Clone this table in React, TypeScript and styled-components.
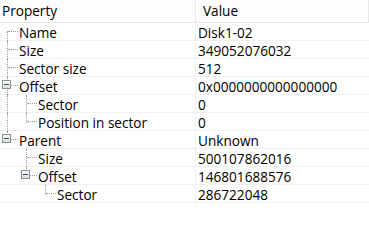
import React from "react";
import styled, { createGlobalStyle } from "styled-components";

const GlobalStyle = createGlobalStyle`
  html, body {
    margin: 0;
    padding: 0;
    background: #ffffff;
  }
  body {
    font-family: "Open Sans", "Noto Sans", sans-serif;
    font-size: 13.6px;
    color: #000000;
  }
`;

const INDENT = 19;

const Grid = styled.div`
  width: 369px;
  height: 245px;
  overflow: hidden;
  background: #ffffff;
`;

const Header = styled.div`
  display: grid;
  grid-template-columns: 196px 1fr;
  height: 22px;
  background: #fdfdfd;
  border-bottom: 1px solid #dfe9f5;
`;

const HeaderCell = styled.div<{ $pad: number }>`
  display: flex;
  align-items: center;
  padding-left: ${(p) => p.$pad}px;
  border-right: 1px solid #e8e8e8;
  line-height: 1;
`;

const Row = styled.div`
  display: grid;
  grid-template-columns: 196px 1fr;
  height: 17px;
  border-bottom: 1px solid #f0f0f0;
`;

const NameCell = styled.div`
  display: flex;
  align-items: stretch;
  border-right: 1px solid #f0f0f0;
  white-space: nowrap;
`;

const ValueCell = styled.div`
  display: flex;
  align-items: center;
  padding-left: 2px;
  white-space: nowrap;
`;

const Guide = styled.div`
  position: relative;
  flex: 0 0 ${INDENT}px;
  height: 100%;
`;

const VLine = styled.div<{ $from: "top" | "mid"; $to: "mid" | "bottom" }>`
  position: absolute;
  left: 7px;
  top: ${(p) => (p.$from === "top" ? "0" : "8px")};
  bottom: ${(p) => (p.$to === "bottom" ? "-1px" : "9px")};
  border-left: 1px dotted #a0a0a0;
`;

const HLine = styled.div`
  position: absolute;
  left: 8px;
  width: 10px;
  top: 8px;
  border-top: 1px dotted #a0a0a0;
`;

const ExpandBox = styled.div`
  position: absolute;
  left: 2px;
  top: 3px;
  width: 9px;
  height: 9px;
  box-sizing: border-box;
  border: 1px solid #8f8f8f;
  background: linear-gradient(#ffffff, #dcdcdc);
  display: flex;
  align-items: center;
  justify-content: center;

  &::after {
    content: "";
    width: 5px;
    height: 1px;
    background: #2a4a8c;
  }
`;

const Label = styled.div`
  display: flex;
  align-items: center;
  line-height: 1;
`;

type Node = {
  name: string;
  value: string;
  children?: Node[];
};

const tree: Node[] = [
  { name: "Name", value: "Disk1-02" },
  { name: "Size", value: "349052076032" },
  { name: "Sector size", value: "512" },
  {
    name: "Offset",
    value: "0x0000000000000000",
    children: [
      { name: "Sector", value: "0" },
      { name: "Position in sector", value: "0" },
    ],
  },
  {
    name: "Parent",
    value: "Unknown",
    children: [
      { name: "Size", value: "500107862016" },
      {
        name: "Offset",
        value: "146801688576",
        children: [{ name: "Sector", value: "286722048" }],
      },
    ],
  },
];

type FlatRow = {
  node: Node;
  ancestors: boolean[]; // true when that ancestor still has siblings below
  first: boolean;
  last: boolean;
  root: boolean;
};

const flatten = (nodes: Node[], ancestors: boolean[], out: FlatRow[]) => {
  nodes.forEach((node, i) => {
    const last = i === nodes.length - 1;
    out.push({ node, ancestors, first: i === 0, last, root: ancestors.length === 0 });
    if (node.children) flatten(node.children, [...ancestors, !last], out);
  });
  return out;
};

const rows = flatten(tree, [], []);

const PropertyGrid: React.FC = () => (
  <Grid>
    <Header>
      <HeaderCell $pad={2}>Property</HeaderCell>
      <HeaderCell $pad={7}>Value</HeaderCell>
    </Header>
    {rows.map((r, idx) => (
      <Row key={idx}>
        <NameCell>
          {r.ancestors.map((more, i) => (
            <Guide key={i}>{more && <VLine $from="top" $to="bottom" />}</Guide>
          ))}
          <Guide>
            <VLine
              $from={r.root && r.first ? "mid" : "top"}
              $to={r.last ? "mid" : "bottom"}
            />
            <HLine />
            {r.node.children && <ExpandBox />}
          </Guide>
          <Label>{r.node.name}</Label>
        </NameCell>
        <ValueCell>{r.node.value}</ValueCell>
      </Row>
    ))}
  </Grid>
);

export default function App() {
  return (
    <>
      <GlobalStyle />
      <PropertyGrid />
    </>
  );
}
